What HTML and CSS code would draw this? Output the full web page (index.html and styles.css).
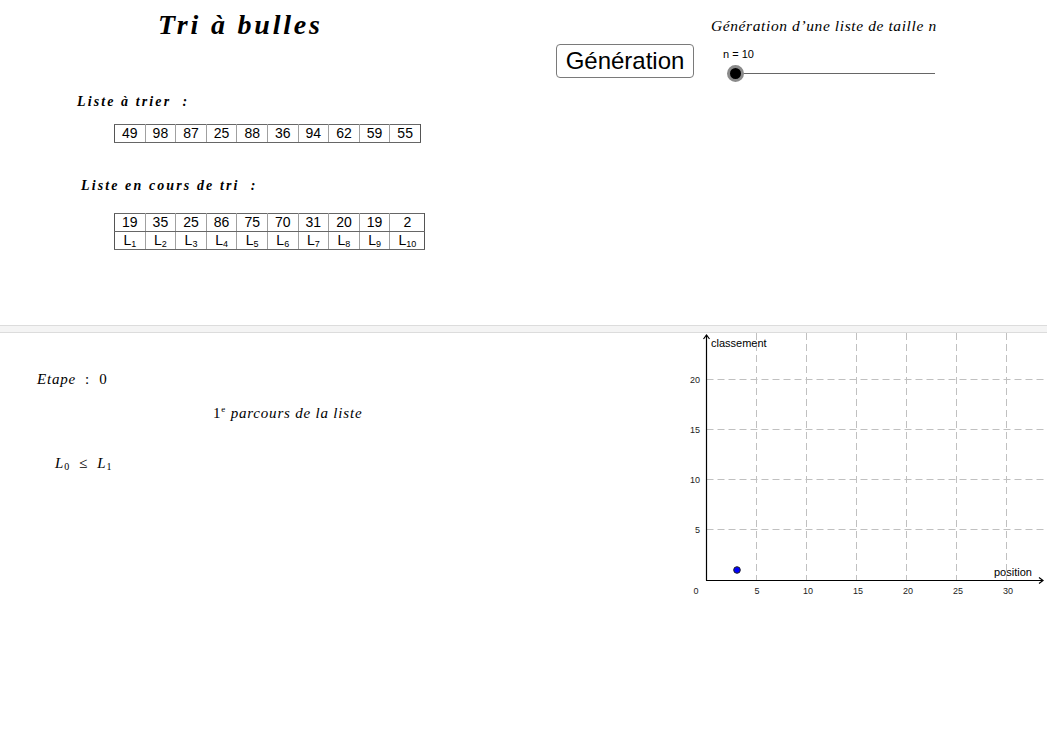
FILE: index.html
```html
<!DOCTYPE html>
<html lang="fr">
<head>
<meta charset="utf-8">
<title>Tri à bulles</title>
<link rel="stylesheet" href="styles.css">
</head>
<body>
<div class="app">
  <section class="top">
    <div class="head">
      <h1 class="title">Tri à bulles</h1>
      <button class="gen-btn" type="button">Génération</button>
      <div class="gen-group">
        <div class="caption">Génération d’une liste de taille n</div>
        <div class="slider">
          <div class="slider-label">n = 10</div>
          <div class="slider-track"><span class="slider-knob"></span></div>
        </div>
      </div>
    </div>

    <div class="label label-1">Liste à trier&nbsp; :</div>
    <table class="list list-1">
      <tr><td>49</td><td>98</td><td>87</td><td>25</td><td>88</td><td>36</td><td>94</td><td>62</td><td>59</td><td>55</td></tr>
    </table>

    <div class="label label-2">Liste en cours de tri&nbsp; :</div>
    <table class="list list-2">
      <tr><td>19</td><td>35</td><td>25</td><td>86</td><td>75</td><td>70</td><td>31</td><td>20</td><td>19</td><td class="wide">2</td></tr>
      <tr><td>L<sub>1</sub></td><td>L<sub>2</sub></td><td>L<sub>3</sub></td><td>L<sub>4</sub></td><td>L<sub>5</sub></td><td>L<sub>6</sub></td><td>L<sub>7</sub></td><td>L<sub>8</sub></td><td>L<sub>9</sub></td><td class="wide">L<sub>10</sub></td></tr>
    </table>
  </section>

  <div class="divider"></div>

  <section class="bottom">
    <div class="left">
      <div class="etape">Etape&nbsp; <span class="up">:&nbsp; 0</span></div>
      <div class="parcours"><span class="up">1<sup>e</sup></span> parcours de la liste</div>
      <div class="compare">L<sub>0</sub>&nbsp; <span class="up">≤</span>&nbsp; L<sub>1</sub></div>
    </div>
    <svg class="graph" width="362" height="270" viewBox="0 0 362 270">
      <g class="grid">
        <line x1="71.5" y1="0" x2="71.5" y2="247"/>
        <line x1="121.5" y1="0" x2="121.5" y2="247"/>
        <line x1="171.5" y1="0" x2="171.5" y2="247"/>
        <line x1="221.5" y1="0" x2="221.5" y2="247"/>
        <line x1="271.5" y1="0" x2="271.5" y2="247"/>
        <line x1="321.5" y1="0" x2="321.5" y2="247"/>
        <line x1="21.5" y1="46.5" x2="362" y2="46.5"/>
        <line x1="21.5" y1="96.5" x2="362" y2="96.5"/>
        <line x1="21.5" y1="146.5" x2="362" y2="146.5"/>
        <line x1="21.5" y1="196.5" x2="362" y2="196.5"/>
      </g>
      <g class="axis">
        <line x1="21.5" y1="2" x2="21.5" y2="247.5"/>
        <line x1="21" y1="247.5" x2="358" y2="247.5"/>
        <polyline points="18.5,6 21.5,2 24.5,6"/>
        <polyline points="354,244.5 358,247.5 354,250.5"/>
      </g>
      <g class="ticks-y">
        <text x="15" y="50">20</text>
        <text x="15" y="100">15</text>
        <text x="15" y="150">10</text>
        <text x="15" y="200">5</text>
      </g>
      <g class="ticks-x">
        <text x="11" y="261">0</text>
        <text x="72" y="261">5</text>
        <text x="123" y="261">10</text>
        <text x="173" y="261">15</text>
        <text x="223" y="261">20</text>
        <text x="273" y="261">25</text>
        <text x="323" y="261">30</text>
      </g>
      <text class="axis-label" x="26" y="14">classement</text>
      <text class="axis-label" x="309" y="243">position</text>
      <circle class="pt" cx="52" cy="237" r="3.3"/>
    </svg>
  </section>
</div>
</body>
</html>
```

FILE: styles.css
```css
* { box-sizing: border-box; }
html, body { margin: 0; padding: 0; background: #fff; }
body {
  font-family: "Liberation Serif", "Times New Roman", serif;
  color: #000;
  width: 1047px;
  height: 736px;
  overflow: hidden;
}
.app { width: 1047px; }

/* ---------- top panel ---------- */
.top { height: 325px; }
.head {
  display: flex;
  align-items: flex-start;
  height: 90px;
  padding-left: 158px;
}
.title {
  margin: 9px 0 0 0;
  width: 398px;
  font-family: "Liberation Serif", serif;
  font-weight: bold;
  font-style: italic;
  font-size: 28px;
  letter-spacing: 2.8px;
  line-height: 32px;
}
.gen-btn {
  margin-top: 44px;
  width: 138px;
  height: 34px;
  padding: 0;
  background: #fff;
  border: 1px solid #7a7a7a;
  border-radius: 4px;
  font-family: "Liberation Sans", Arial, sans-serif;
  font-size: 24px;
  color: #000;
  line-height: 30px;
}
.gen-group { margin-left: 17px; padding-top: 17px; }
.caption {
  font-style: italic;
  font-size: 15.5px;
  letter-spacing: 0.6px;
  line-height: 18px;
}
.slider { margin-left: 12px; margin-top: 13px; }
.slider-label {
  font-family: "Liberation Sans", Arial, sans-serif;
  font-size: 11px;
  line-height: 13px;
}
.slider-track {
  position: relative;
  margin-top: 12px;
  margin-left: 12px;
  width: 200px;
  height: 1px;
  background: #666;
}
.slider-knob {
  position: absolute;
  left: -8px;
  top: -8px;
  width: 17px;
  height: 17px;
  border-radius: 50%;
  background: #000;
  border: 3px solid #8a8a8a;
}

.label {
  font-weight: bold;
  font-style: italic;
  font-size: 14px;
  letter-spacing: 2.1px;
  line-height: 16px;
}
.label-1 { margin: 4px 0 0 77px; }
.label-2 { margin: 35px 0 0 81px; }

.list {
  border-collapse: collapse;
  font-family: "Liberation Sans", Arial, sans-serif;
  font-size: 14px;
  margin-left: 114px;
}
.list td {
  width: 30.6px;
  min-width: 30.6px;
  height: 18px;
  padding: 0;
  text-align: center;
  line-height: 17px;
  border: 1px solid #666;
  border-left-color: #a0a0a0;
  border-right-color: #a0a0a0;
}
.list td:first-child { border-left-color: #555; }
.list td:last-child { border-right-color: #555; }
.list td.wide { width: 35px; min-width: 35px; }
.list sub { font-size: 9px; vertical-align: -2px; line-height: 0; }
.list-1 { margin-top: 14px; }
.list-2 { margin-top: 19px; }

/* ---------- divider ---------- */
.divider {
  height: 8px;
  background: #f4f4f4;
  border-top: 1px solid #dcdcdc;
  border-bottom: 1px solid #dcdcdc;
}

/* ---------- bottom panel ---------- */
.bottom { display: flex; height: 403px; }
.left {
  width: 685px;
  font-style: italic;
  font-size: 15px;
  letter-spacing: 0.8px;
}
.up { font-style: normal; }
.etape { margin: 37px 0 0 37px; line-height: 18px; }
.parcours { margin: 16px 0 0 213px; line-height: 18px; }
.parcours sup { font-size: 9px; vertical-align: 6px; line-height: 0; }
.compare { margin: 32px 0 0 55px; line-height: 18px; }
.compare sub { font-style: normal; font-size: 10px; vertical-align: -2px; line-height: 0; }

.graph { display: block; }
.grid line { stroke: #c0c0c0; stroke-width: 1; stroke-dasharray: 7 4; }
.axis line, .axis polyline { stroke: #000; stroke-width: 1.2; fill: none; }
.ticks-y text { font-family: "Liberation Sans", Arial, sans-serif; font-size: 9px; fill: #222; text-anchor: end; }
.ticks-x text { font-family: "Liberation Sans", Arial, sans-serif; font-size: 9px; fill: #222; text-anchor: middle; }
.axis-label { font-family: "Liberation Sans", Arial, sans-serif; font-size: 11px; fill: #000; }
.pt { fill: #0000ff; stroke: #222; stroke-width: 1; }
```
